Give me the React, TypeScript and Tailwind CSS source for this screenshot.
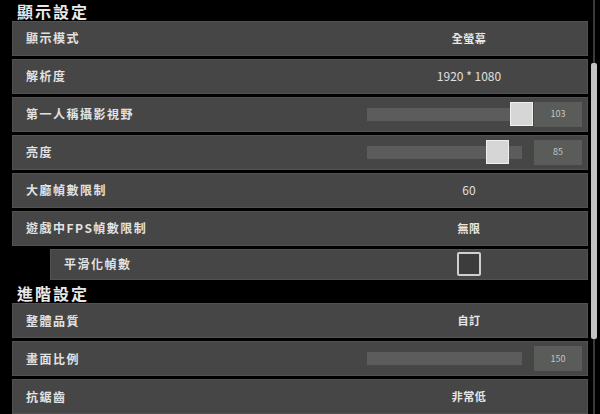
import React from "react";

const FONT = { fontFamily: '"Noto Sans CJK TC", "Noto Sans CJK SC", "Noto Sans", sans-serif' };

function Row({ label, children, indent = false, h = "h-[35px]" }: { label: string; children?: React.ReactNode; indent?: boolean; h?: string }) {
  return (
    <div className={`${h} flex items-center bg-[#464646] border border-[#525252] ${indent ? "ml-[38px]" : ""}`}>
      <div className="flex-1 pl-[13px] text-[12px] font-bold tracking-[1.5px] text-[#e2e2e2] leading-none">{label}</div>
      <div className="w-[236px] h-full flex items-center justify-center">{children}</div>
    </div>
  );
}

function Value({ text }: { text: string }) {
  return <span className="text-[11px] font-bold text-[#e6e6e6] tracking-[0.5px] leading-none">{text}</span>;
}

function Slider({ value, thumb }: { value: string; thumb?: number }) {
  return (
    <div className="w-full h-full flex items-center pl-[16px] pr-[5px]">
      <div className="relative w-[155px] h-[13px] bg-[#5c5c5c]">
        {thumb !== undefined && (
          <div
            className="absolute top-[-6px] w-[23px] h-[24px] bg-[#d6d6d6] border border-[#f0f0f0]"
            style={{ left: thumb }}
          />
        )}
      </div>
      <div className="ml-[12px] w-[48px] h-[25px] bg-[#5a5c59] flex items-center justify-center text-[9px] text-[#c4c4c4]">
        {value}
      </div>
    </div>
  );
}

export default function App() {
  return (
    <div className="w-[600px] h-[414px] bg-black overflow-hidden flex" style={FONT}>
      <div className="w-[588px] pl-[12px] flex flex-col">
        <div className="h-[22px] pt-[2px] pl-[5px] text-[16px] font-bold tracking-[2px] text-[#e8e8e8] leading-[18px]">顯示設定</div>
        <div className="flex flex-col gap-[3px]">
          <Row label="顯示模式"><Value text="全螢幕" /></Row>
          <Row label="解析度"><span className="text-[12px] text-[#e0e0e0] leading-none">1920 * 1080</span></Row>
          <Row label="第一人稱攝影視野"><Slider value="103" thumb={143} /></Row>
          <Row label="亮度"><Slider value="85" thumb={119} /></Row>
          <Row label="大廳幀數限制"><span className="text-[12px] text-[#e0e0e0] leading-none">60</span></Row>
          <Row label="遊戲中FPS幀數限制"><Value text="無限" /></Row>
          <Row label="平滑化幀數" indent h="h-[31px]">
            <div className="w-[24px] h-[24px] border-2 border-[#cfcfcf] bg-[#3c3c3c] rounded-[2px]" />
          </Row>
        </div>
        <div className="h-[25px] pt-[4px] pl-[5px] text-[16px] font-bold tracking-[2px] text-[#e8e8e8] leading-[18px]">進階設定</div>
        <div className="flex flex-col gap-[3px]">
          <Row label="整體品質"><Value text="自訂" /></Row>
          <Row label="畫面比例"><Slider value="150" /></Row>
          <Row label="抗鋸齒"><Value text="非常低" /></Row>
        </div>
      </div>
      <div className="w-[12px] h-full pl-[3px]">
        <div className="w-[6px] h-full flex flex-col items-center">
          <div className="w-[2px] h-[63px] bg-[#3a3a3a]" />
          <div className="w-[6px] h-[276px] bg-[#c2c2c2] rounded-[2px]" />
          <div className="w-[2px] flex-1 bg-[#3a3a3a]" />
        </div>
      </div>
    </div>
  );
}
